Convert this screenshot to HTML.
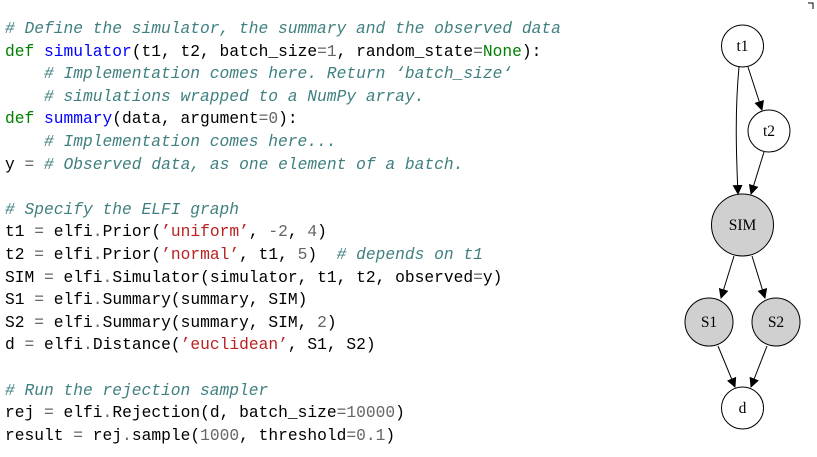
<!DOCTYPE html>
<html><head><meta charset="utf-8"><style>
html,body{margin:0;padding:0;background:#fff;width:817px;height:457px;overflow:hidden;position:relative}
pre{position:absolute;left:5px;top:18px;margin:0;font-family:"Liberation Mono",monospace;font-size:16.25px;line-height:22.6px;color:#000}
.c{color:#408080;font-style:italic}.k{color:#008000}.f{color:#0000ff}.s{color:#ba2121}.n{color:#666}.o{color:#666}
svg{position:absolute;left:0;top:0}
</style></head><body>
<pre><span class="c"># Define the simulator, the summary and the observed data</span>
<span class="k">def</span> <span class="f">simulator</span>(t1, t2, batch_size<span class="o">=</span><span class="n">1</span>, random_state<span class="o">=</span><span class="k">None</span>):
    <span class="c"># Implementation comes here. Return ‘batch_size‘</span>
    <span class="c"># simulations wrapped to a NumPy array.</span>
<span class="k">def</span> <span class="f">summary</span>(data, argument<span class="o">=</span><span class="n">0</span>):
    <span class="c"># Implementation comes here...</span>
y <span class="o">=</span> <span class="c"># Observed data, as one element of a batch.</span>

<span class="c"># Specify the ELFI graph</span>
t1 <span class="o">=</span> elfi<span class="o">.</span>Prior(<span class="s">’uniform’</span>, <span class="o">-</span><span class="n">2</span>, <span class="n">4</span>)
t2 <span class="o">=</span> elfi<span class="o">.</span>Prior(<span class="s">’normal’</span>, t1, <span class="n">5</span>)  <span class="c"># depends on t1</span>
SIM <span class="o">=</span> elfi<span class="o">.</span>Simulator(simulator, t1, t2, observed<span class="o">=</span>y)
S1 <span class="o">=</span> elfi<span class="o">.</span>Summary(summary, SIM)
S2 <span class="o">=</span> elfi<span class="o">.</span>Summary(summary, SIM, <span class="n">2</span>)
d <span class="o">=</span> elfi<span class="o">.</span>Distance(<span class="s">’euclidean’</span>, S1, S2)

<span class="c"># Run the rejection sampler</span>
rej <span class="o">=</span> elfi<span class="o">.</span>Rejection(d, batch_size<span class="o">=</span><span class="n">10000</span>)
result <span class="o">=</span> rej<span class="o">.</span>sample(<span class="n">1000</span>, threshold<span class="o">=</span><span class="n">0.1</span>)</pre>
<svg width="817" height="457" viewBox="0 0 817 457" font-family="Liberation Serif,serif" font-size="15.5">
<defs><marker id="a" markerWidth="10" markerHeight="10" refX="9" refY="5" orient="auto" markerUnits="userSpaceOnUse"><path d="M0,0 L10,5 L0,10 z" fill="#000"/></marker></defs>
<path d="M808,3 H813 V9" fill="none" stroke="#000" stroke-width="1"/>
<g stroke="#000" stroke-width="1" fill="none">
<path d="M739,67 C735,110 736,150 738,194" marker-end="url(#a)"/>
<path d="M748,67 L762,110" marker-end="url(#a)"/>
<path d="M764,152 L751,194" marker-end="url(#a)"/>
<path d="M734,256 L721,298" marker-end="url(#a)"/>
<path d="M752,256 L765,298" marker-end="url(#a)"/>
<path d="M718,346 L735,387" marker-end="url(#a)"/>
<path d="M767,346 L751,387" marker-end="url(#a)"/>
</g>
<g stroke="#000" stroke-width="1">
<circle cx="742.5" cy="46" r="21" fill="#fff"/>
<circle cx="769" cy="131" r="21" fill="#fff"/>
<circle cx="742.5" cy="225" r="31" fill="#d0d0d0"/>
<circle cx="709" cy="322" r="24" fill="#d0d0d0"/>
<circle cx="776" cy="322" r="24" fill="#d0d0d0"/>
<circle cx="742.5" cy="408" r="21" fill="#fff"/>
</g>
<g text-anchor="middle" fill="#000">
<text x="742.5" y="51">t1</text>
<text x="769" y="136">t2</text>
<text x="742.5" y="230">SIM</text>
<text x="709" y="327">S1</text>
<text x="776" y="327">S2</text>
<text x="742.5" y="413">d</text>
</g>
</svg>
</body></html>
